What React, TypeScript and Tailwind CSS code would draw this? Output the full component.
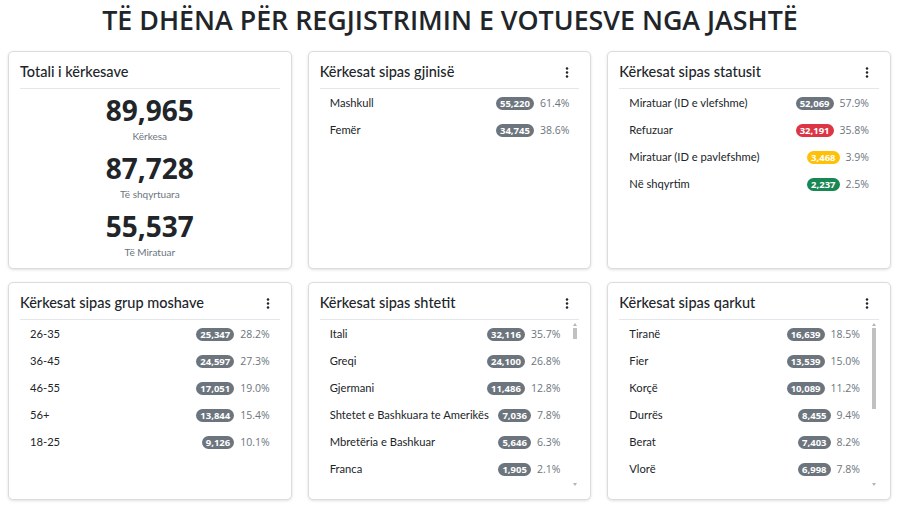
import React from "react";

type Row = { label: string; value: number; color?: string };

const TOTAL = 89965;

const fmt = (n: number) => n.toLocaleString("en-US");
const pct = (n: number) => ((n / TOTAL) * 100).toFixed(1) + "%";

const gender: Row[] = [
  { label: "Mashkull", value: 55220 },
  { label: "Femër", value: 34745 },
];

const status: Row[] = [
  { label: "Miratuar (ID e vlefshme)", value: 52069, color: "bg-[#6c757d]" },
  { label: "Refuzuar", value: 32191, color: "bg-[#dc3545]" },
  { label: "Miratuar (ID e pavlefshme)", value: 3468, color: "bg-[#ffc107]" },
  { label: "Në shqyrtim", value: 2237, color: "bg-[#198754]" },
];

const ages: Row[] = [
  { label: "26-35", value: 25347 },
  { label: "36-45", value: 24597 },
  { label: "46-55", value: 17051 },
  { label: "56+", value: 13844 },
  { label: "18-25", value: 9126 },
];

const topCountries: Row[] = [
  { label: "Itali", value: 32116 },
  { label: "Greqi", value: 24100 },
  { label: "Gjermani", value: 11486 },
  { label: "Shtetet e Bashkuara te Amerikës", value: 7036 },
  { label: "Mbretëria e Bashkuar", value: 5646 },
  { label: "Franca", value: 1905 },
];

const otherCountryNames = [
  "Zvicra", "Belgjika", "Kanadaja", "Austria", "Holanda", "Suedia", "Spanja", "Turqia",
  "Kosova", "Maqedonia e Veriut", "Mali i Zi", "Australia", "Norvegjia", "Danimarka",
  "Irlanda", "Finlanda", "Polonia", "Çekia", "Hungaria", "Rumania", "Bullgaria", "Kroacia",
  "Sllovenia", "Serbia", "Luksemburgu", "Portugalia", "Qiproja", "Malta",
  "Emiratet e Bashkuara Arabe", "Katari", "Kuvajti", "Arabia Saudite", "Izraeli", "Egjipti",
  "Rusia", "Ukraina", "Japonia", "Kina", "Korea e Jugut", "Brazili", "Argjentina", "Meksika",
];

const countries: Row[] = [
  ...topCountries,
  ...otherCountryNames.map((label, i) => ({
    label,
    value: Math.max(1, Math.round(1500 * Math.pow(0.85, i))),
  })),
];

const counties: Row[] = [
  { label: "Tiranë", value: 16639 },
  { label: "Fier", value: 13539 },
  { label: "Korçë", value: 10089 },
  { label: "Durrës", value: 8455 },
  { label: "Berat", value: 7403 },
  { label: "Vlorë", value: 6998 },
  { label: "Elbasan", value: 6512 },
  { label: "Shkodër", value: 5876 },
  { label: "Gjirokastër", value: 4921 },
  { label: "Lezhë", value: 3802 },
  { label: "Dibër", value: 3105 },
  { label: "Kukës", value: 2626 },
];

function Kebab() {
  return (
    <svg width="4" height="11" viewBox="0 0 4 11" className="mr-[10px]">
      <circle cx="2" cy="1.6" r="1.25" fill="#212529" />
      <circle cx="2" cy="5.5" r="1.25" fill="#212529" />
      <circle cx="2" cy="9.4" r="1.25" fill="#212529" />
    </svg>
  );
}

function Card({
  title,
  menu = true,
  children,
}: {
  title: string;
  menu?: boolean;
  children: React.ReactNode;
}) {
  return (
    <div className="flex h-[218px] flex-col rounded-[5px] border border-[#dcdcdc] bg-white px-[11px] pt-[10px] pb-[12px] shadow-[0_1px_3px_rgba(0,0,0,0.12)]">
      <div className="flex shrink-0 items-center justify-between border-b border-[#e3e6ea] pb-[6px]">
        <span className="text-[14.5px] font-medium leading-[20px] text-[#212529]">{title}</span>
        {menu && <Kebab />}
      </div>
      {children}
    </div>
  );
}

function ListRow({ row }: { row: Row }) {
  return (
    <div className="flex h-[27px] shrink-0 items-center justify-between gap-[4px] pl-[10px] pr-[10px]">
      <span className="whitespace-nowrap text-[11.2px] text-[#212529]">{row.label}</span>
      <div className="flex shrink-0 items-center gap-[6px]">
        <span
          className={`${row.color ?? "bg-[#6c757d]"} rounded-full px-[4px] text-[9.5px] font-bold leading-[13px] text-white`}
          style={{ fontFamily: '"Open Sans", sans-serif' }}
        >
          {fmt(row.value)}
        </span>
        <span
          className="text-[10.5px] text-[#6c757d]"
          style={{ fontFamily: '"Open Sans", sans-serif' }}
        >
          {pct(row.value)}
        </span>
      </div>
    </div>
  );
}

function ScrollBar({ thumb }: { thumb: string }) {
  return (
    <div className="flex w-[9px] shrink-0 flex-col items-center pt-[3px]">
      <span className="h-0 w-0 border-x-[2px] border-b-[3px] border-x-transparent border-b-[#b5b5b5]" />
      <div className="flex w-full flex-1 flex-col items-center pt-[2px] pb-[2px]">
        <div className={`${thumb} w-[4px] bg-[#c1c1c1]`} />
      </div>
      <span className="mb-[1px] h-0 w-0 border-x-[2px] border-t-[3px] border-x-transparent border-t-[#b5b5b5]" />
    </div>
  );
}

function List({ rows, thumb }: { rows: Row[]; thumb?: string }) {
  if (thumb) {
    return (
      <div className="flex min-h-0 flex-1">
        <div className="mt-[1px] flex min-w-0 flex-1 flex-col overflow-hidden">
          {rows.map((r) => (
            <ListRow key={r.label} row={r} />
          ))}
        </div>
        <ScrollBar thumb={thumb} />
      </div>
    );
  }
  return (
    <div className="mt-[1px] flex flex-col">
      {rows.map((r) => (
        <ListRow key={r.label} row={r} />
      ))}
    </div>
  );
}

function Stat({ value, label }: { value: string; label: string }) {
  return (
    <div className="mb-[8px] flex flex-col items-center">
      <span
        className="text-[28px] font-bold leading-[34px] text-[#212529]"
        style={{ fontFamily: '"Open Sans", sans-serif' }}
      >
        {value}
      </span>
      <span className="mt-[3px] text-[10px] leading-[13px] text-[#6c757d]">{label}</span>
    </div>
  );
}

export default function App() {
  return (
    <div
      className="min-h-[509px] w-[900px] bg-white"
      style={{ fontFamily: 'Lato, "Open Sans", sans-serif' }}
    >
      <h1
        className="pt-[2px] text-center text-[26.8px] font-semibold leading-[36px] text-[#212529]"
        style={{ fontFamily: '"Open Sans", sans-serif' }}
      >
        TË DHËNA PËR REGJISTRIMIN E VOTUESVE NGA JASHTË
      </h1>
      <div className="ml-[8px] mt-[13px] grid w-[883px] grid-cols-3 gap-x-[16px] gap-y-[13px]">
        <Card title="Totali i kërkesave" menu={false}>
          <div className="mt-[4px] flex flex-col">
            <Stat value="89,965" label="Kërkesa" />
            <Stat value="87,728" label="Të shqyrtuara" />
            <Stat value="55,537" label="Të Miratuar" />
          </div>
        </Card>
        <Card title="Kërkesat sipas gjinisë">
          <List rows={gender} />
        </Card>
        <Card title="Kërkesat sipas statusit">
          <List rows={status} />
        </Card>
        <Card title="Kërkesat sipas grup moshave">
          <List rows={ages} />
        </Card>
        <Card title="Kërkesat sipas shtetit">
          <List rows={countries} thumb="h-[11px]" />
        </Card>
        <Card title="Kërkesat sipas qarkut">
          <List rows={counties} thumb="h-[81px]" />
        </Card>
      </div>
    </div>
  );
}
